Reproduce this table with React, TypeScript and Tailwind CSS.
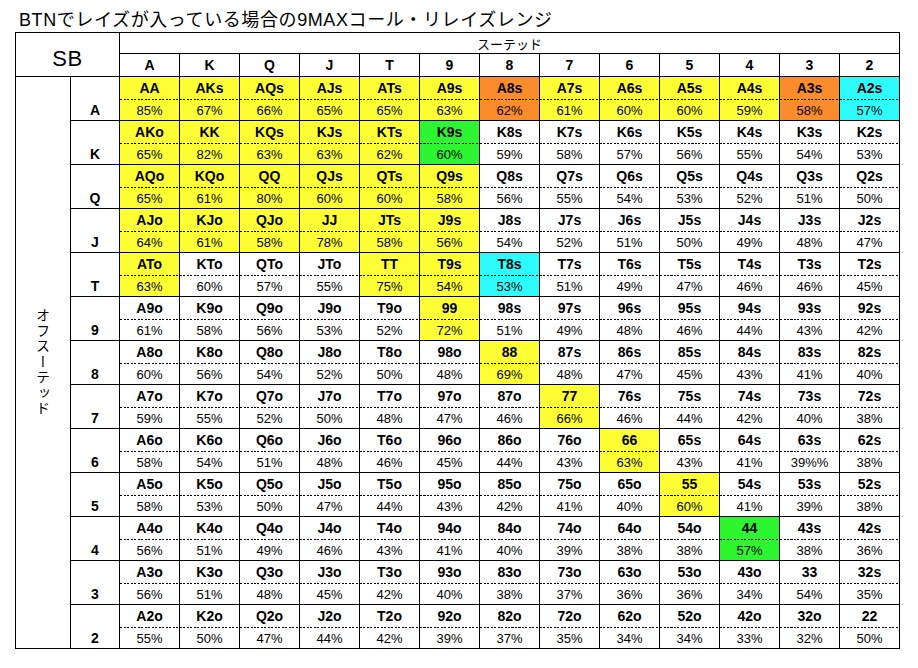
import React from "react";

const R = ["A", "K", "Q", "J", "T", "9", "8", "7", "6", "5", "4", "3", "2"];

const P: (number | string)[][] = [
  [85, 67, 66, 65, 65, 63, 62, 61, 60, 60, 59, 58, 57],
  [65, 82, 63, 63, 62, 60, 59, 58, 57, 56, 55, 54, 53],
  [65, 61, 80, 60, 60, 58, 56, 55, 54, 53, 52, 51, 50],
  [64, 61, 58, 78, 58, 56, 54, 52, 51, 50, 49, 48, 47],
  [63, 60, 57, 55, 75, 54, 53, 51, 49, 47, 46, 46, 45],
  [61, 58, 56, 53, 52, 72, 51, 49, 48, 46, 44, 43, 42],
  [60, 56, 54, 52, 50, 48, 69, 48, 47, 45, 43, 41, 40],
  [59, 55, 52, 50, 48, 47, 46, 66, 46, 44, 42, 40, 38],
  [58, 54, 51, 48, 46, 45, 44, 43, 63, 43, 41, "39%", 38],
  [58, 53, 50, 47, 44, 43, 42, 41, 40, 60, 41, 39, 38],
  [56, 51, 49, 46, 43, 41, 40, 39, 38, 38, 57, 38, 36],
  [56, 51, 48, 45, 42, 40, 38, 37, 36, 36, 34, 54, 35],
  [55, 50, 47, 44, 42, 39, 37, 35, 34, 34, 33, 32, 50],
];

// y = yellow, o = orange, c = cyan, g = green, . = white
const C = [
  "yyyyyyoyyyyoc",
  "yyyyyg.......",
  "yyyyyy.......",
  "yyyyyy.......",
  "y...yyc......",
  ".....y.......",
  "......y......",
  ".......y.....",
  "........y....",
  ".........y...",
  "..........g..",
  ".............",
  ".............",
];

const bgFor = (ch: string) => {
  switch (ch) {
    case "y":
      return "bg-[#ffff36]";
    case "o":
      return "bg-[#fa8c2b]";
    case "c":
      return "bg-[#2efcfc]";
    case "g":
      return "bg-[#2df52f]";
    default:
      return "bg-white";
  }
};

const hand = (i: number, j: number) => {
  if (i === j) return R[i] + R[j];
  if (j > i) return R[i] + R[j] + "s";
  return R[j] + R[i] + "o";
};

function Cell({ i, j }: { i: number; j: number }) {
  return (
    <div className={`flex flex-col border-r border-b border-black ${bgFor(C[i][j])}`}>
      <div className="h-[22px] flex items-center justify-center text-[14px] font-bold leading-none">
        {hand(i, j)}
      </div>
      <div className="h-px bg-[repeating-linear-gradient(90deg,#000_0_2px,transparent_2px_3.5px)]" />
      <div className="flex-1 flex items-center justify-center text-[13px] leading-none">
        {P[i][j]}%
      </div>
    </div>
  );
}

export default function App() {
  return (
    <div className="w-[918px] h-[668px] bg-white text-black font-['Liberation_Sans','Noto_Sans_CJK_JP',sans-serif]">
      <div className="h-[32px] pt-[10px] pl-[19px] text-[18px] leading-[20px] tracking-[0.6px] whitespace-nowrap">
        BTNでレイズが入っている場合の9MAXコール・リレイズレンジ
      </div>
      <div className="ml-[15px] inline-grid grid-cols-[55px_49px_repeat(13,60px)] grid-rows-[21px_23px_repeat(13,44px)] border-l border-t border-black">
        <div className="col-span-2 row-span-2 border-r border-b border-black flex items-center justify-center pt-[9px] text-[22px] tracking-[0.5px] leading-none">
          SB
        </div>
        <div className="col-span-13 border-r border-b border-black flex items-center justify-center text-[13px] leading-none font-['Noto_Sans_CJK_JP',sans-serif]">
          スーテッド
        </div>
        {R.map((r) => (
          <div
            key={r}
            className="border-r border-b border-black flex items-center justify-center text-[14px] font-bold leading-none"
          >
            {r}
          </div>
        ))}
        <div className="row-span-13 border-r border-b border-black flex items-center justify-center">
          <span className="[writing-mode:vertical-rl] text-[14px] tracking-[1.5px] leading-none font-['Noto_Sans_CJK_JP',sans-serif]">
            オフスーテッド
          </span>
        </div>
        {R.map((r, i) => (
          <React.Fragment key={r}>
            <div className="border-r border-b border-black flex flex-col">
              <div className="h-[23px]" />
              <div className="flex-1 flex items-center justify-center text-[14px] font-bold leading-none">
                {r}
              </div>
            </div>
            {R.map((_, j) => (
              <Cell key={j} i={i} j={j} />
            ))}
          </React.Fragment>
        ))}
      </div>
    </div>
  );
}
